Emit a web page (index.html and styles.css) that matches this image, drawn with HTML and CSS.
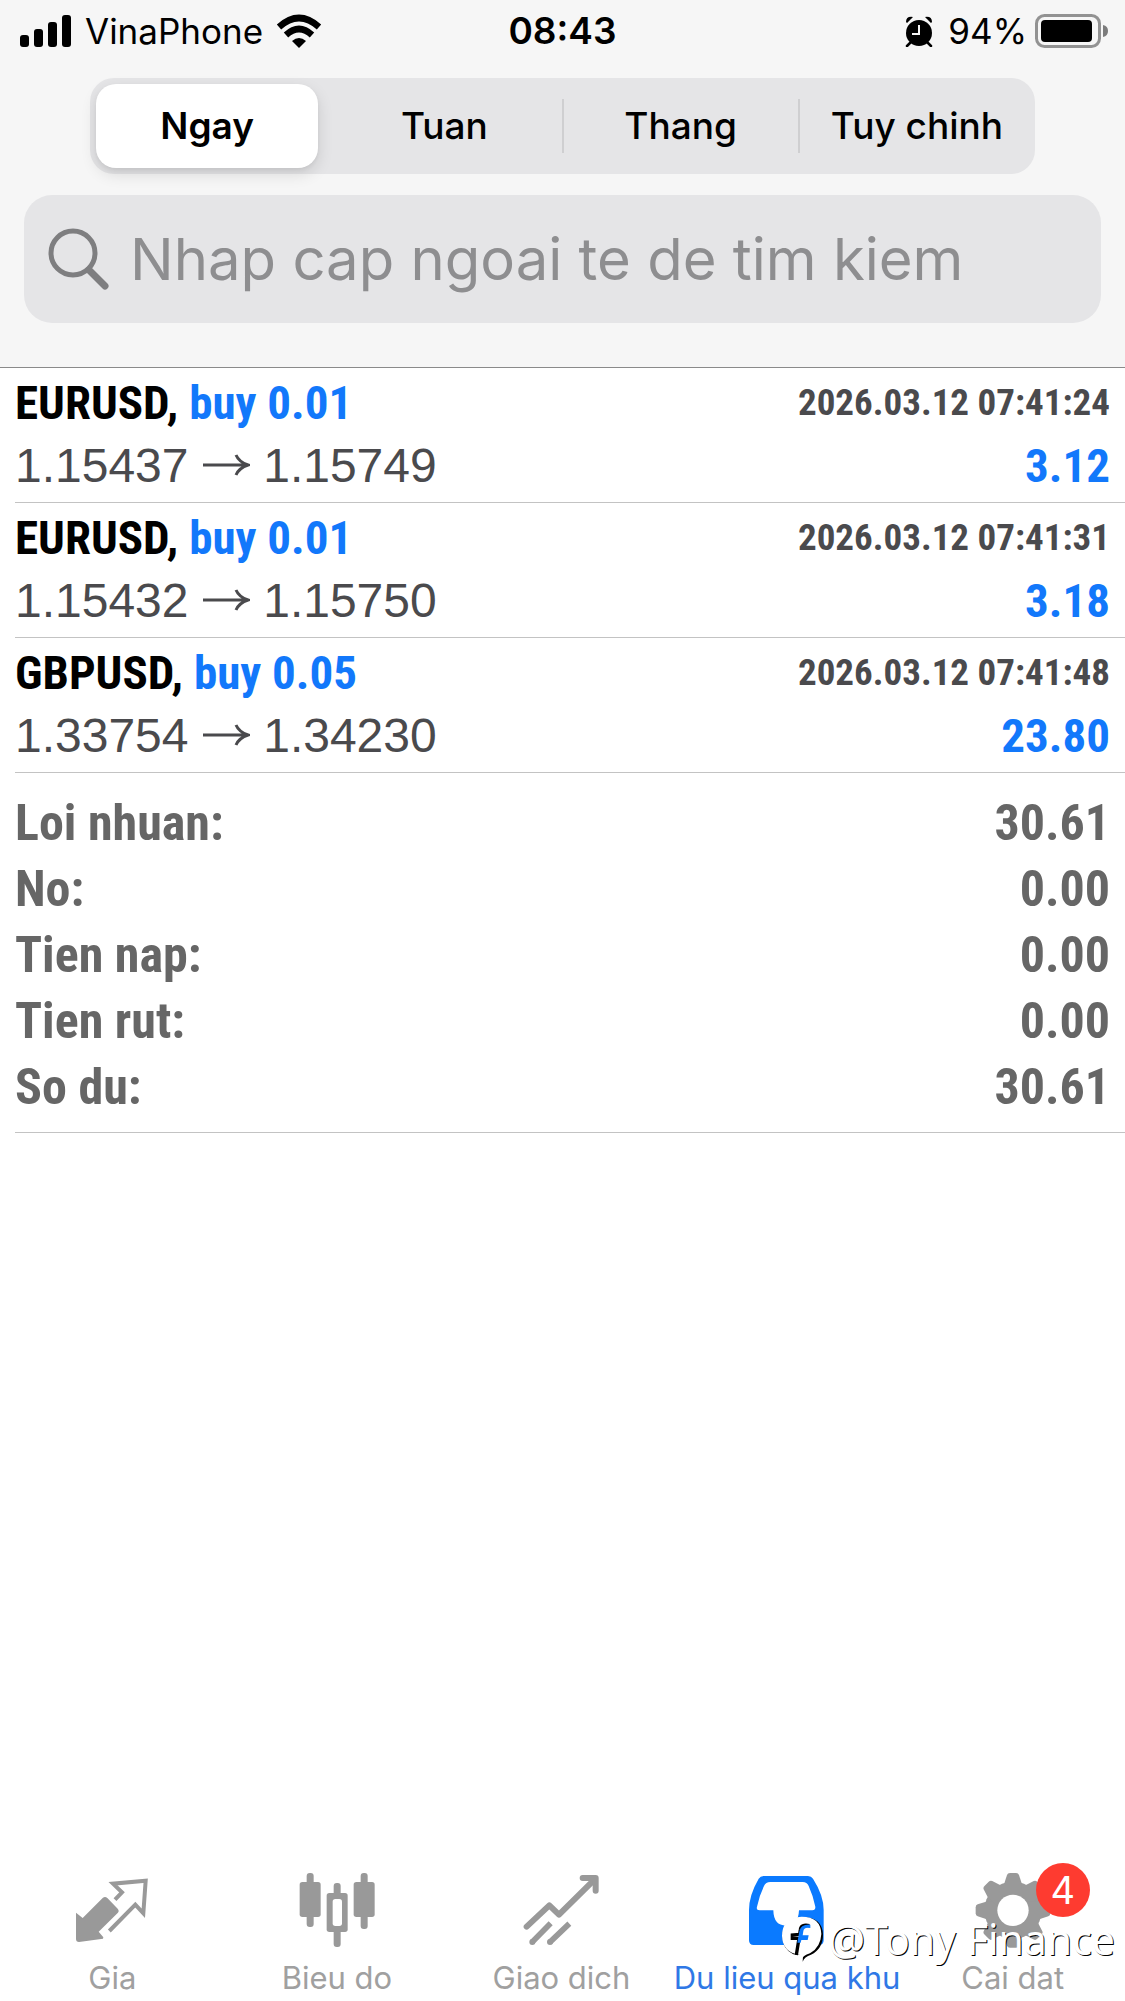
FILE: index.html
```html
<!DOCTYPE html>
<html lang="vi">
<head>
<meta charset="utf-8">
<meta name="viewport" content="width=device-width, initial-scale=1">
<title>Du lieu qua khu</title>
<link rel="stylesheet" href="styles.css">
</head>
<body>
<svg class="defs" width="0" height="0" aria-hidden="true">
  <symbol id="arrow" viewBox="0 0 48 34"><path d="M1 17h45M34 7q3 7 12 10-9 3-12 10" fill="none" stroke="currentColor" stroke-width="3"/></symbol>
</svg>
<div class="app">
  <header class="header">
    <div class="status">
      <div class="status-side">
        <svg class="signal" viewBox="0 0 52 32" aria-hidden="true"><rect x="0" y="20" width="9" height="12" rx="3"/><rect x="14" y="14" width="9" height="18" rx="3"/><rect x="28" y="7" width="9" height="25" rx="3"/><rect x="42" y="0" width="9" height="32" rx="3"/></svg>
        <span class="carrier">VinaPhone</span>
        <svg class="wifi" viewBox="0 0 46 34" aria-hidden="true"><path d="M3 13Q23-5 43 13M10 21Q23 9 36 21" fill="none" stroke="#000" stroke-width="6.5"/><path d="M16 27Q23 21 30 27L23 34Z"/></svg>
      </div>
      <time class="clock">08:43</time>
      <div class="status-side status-right">
        <svg class="alarm" viewBox="0 0 28 31" aria-hidden="true"><circle cx="14" cy="17" r="13"/><path d="M1 6Q1 0 8 1L2 7ZM27 6Q27 0 20 1L26 7Z"/><path d="M5 27l-3 3M23 27l3 3" stroke="#000" stroke-width="2.5" stroke-linecap="round"/><path d="M14 9v9H7" fill="none" stroke="#f6f6f6" stroke-width="2"/></svg>
        <span class="percent">94%</span>
        <svg class="battery" viewBox="0 0 74 34" aria-hidden="true"><rect x="1.5" y="1.5" width="63" height="31" rx="8" fill="none" stroke="#929292" stroke-width="3"/><rect x="6" y="6" width="51" height="22" rx="4"/><path d="M68 11q5 1 5 6t-5 6z" fill="#7c7c7c"/></svg>
      </div>
    </div>
    <div class="segments" role="group" aria-label="Ky">
      <button class="segment segment-on" type="button" aria-pressed="true">Ngay</button>
      <button class="segment" type="button">Tuan</button>
      <button class="segment segment-rule" type="button">Thang</button>
      <button class="segment segment-rule" type="button">Tuy chinh</button>
    </div>
    <label class="search">
      <svg class="search-icon" viewBox="0 0 62 62" aria-hidden="true"><circle cx="25" cy="25" r="22" fill="none" stroke="#7e7e80" stroke-width="5"/><path d="M41 42l16 16" stroke="#7e7e80" stroke-width="7" stroke-linecap="round"/></svg>
      <input class="search-input" type="text" placeholder="Nhap cap ngoai te de tim kiem" aria-label="Nhap cap ngoai te de tim kiem">
    </label>
  </header>

  <main class="main">
    <ul class="trades">
      <li class="trade">
        <div class="line"><strong class="symbol">EURUSD, <span class="side">buy 0.01</span></strong><time class="date">2026.03.12 07:41:24</time></div>
        <div class="line"><span class="prices">1.15437 <svg class="arrow" role="img" aria-label="→"><use href="#arrow"/></svg> 1.15749</span><strong class="profit">3.12</strong></div>
      </li>
      <li class="trade">
        <div class="line"><strong class="symbol">EURUSD, <span class="side">buy 0.01</span></strong><time class="date">2026.03.12 07:41:31</time></div>
        <div class="line"><span class="prices">1.15432 <svg class="arrow" role="img" aria-label="→"><use href="#arrow"/></svg> 1.15750</span><strong class="profit">3.18</strong></div>
      </li>
      <li class="trade">
        <div class="line"><strong class="symbol">GBPUSD, <span class="side">buy 0.05</span></strong><time class="date">2026.03.12 07:41:48</time></div>
        <div class="line"><span class="prices">1.33754 <svg class="arrow" role="img" aria-label="→"><use href="#arrow"/></svg> 1.34230</span><strong class="profit">23.80</strong></div>
      </li>
    </ul>
    <dl class="summary">
      <div class="total"><dt>Loi nhuan:</dt><dd>30.61</dd></div>
      <div class="total"><dt>No:</dt><dd>0.00</dd></div>
      <div class="total"><dt>Tien nap:</dt><dd>0.00</dd></div>
      <div class="total"><dt>Tien rut:</dt><dd>0.00</dd></div>
      <div class="total"><dt>So du:</dt><dd>30.61</dd></div>
    </dl>
  </main>

  <nav class="tabs">
    <a class="tab" href="#gia">
      <svg class="tab-icon" viewBox="223 66 228 228" aria-hidden="true"><path d="M229 188l20 16 60-60q7-6 14 0l31 32q6 7 0 13l-57 56 14 17-1 4-72 10q-9 0-9-9z" fill="#999"/><path d="M346 149l21-22-27-26 98-9-7 98-24-26-78 79" fill="none" stroke="#999" stroke-width="12"/></svg>
      <span>Gia</span>
    </a>
    <a class="tab" href="#bieu-do">
      <svg class="tab-icon" viewBox="898 66 228 228" aria-hidden="true"><g fill="#999"><rect x="921" y="69" width="21" height="162" rx="9"/><rect x="900" y="96" width="63" height="105" rx="8"/><rect x="1083" y="69" width="21" height="168" rx="9"/><rect x="1062" y="96" width="63" height="105" rx="8"/><rect x="1002" y="99" width="21" height="192" rx="9"/><rect x="981" y="129" width="63" height="117" rx="8"/></g><rect x="999" y="147" width="28" height="81" rx="8" fill="#fff"/></svg>
      <span>Bieu do</span>
    </a>
    <a class="tab" href="#giao-dich">
      <svg class="tab-icon" viewBox="373 66 228 228" aria-hidden="true"><g fill="none" stroke="#999" stroke-width="18" stroke-linecap="round" stroke-linejoin="round"><path d="M384 230l68-64 29 28L588 88"/><path d="M552 84h39v38"/></g><path d="M400 277l56-57M453 277l59-56" stroke="#999" stroke-width="17"/><g fill="#999"><circle cx="401" cy="276" r="9"/><circle cx="454" cy="276" r="9"/></g></svg>
      <span>Giao dich</span>
    </a>
    <a class="tab tab-on" href="#lich-su" aria-current="page">
      <svg class="tab-icon" viewBox="148 66 228 228" aria-hidden="true"><path d="M192 78h133q10 0 15 8 32 50 32 94v91q0 14-14 14H162q-14 0-14-14v-91q0-44 29-94 5-8 15-8z" fill="#0a7aff"/><path d="M212 96h97q13 0 18 12 14 31 20 62 1 11-9 11h-40q-2 46-39 46t-38-46h-41q-11 0-8-11 7-33 21-62 5-12 19-12z" fill="#fff"/></svg>
      <span>Du lieu qua khu</span>
    </a>
    <a class="tab" href="#cai-dat">
      <span class="icon-wrap">
        <svg class="tab-icon" viewBox="823 66 228 228" aria-hidden="true"><g fill="#999"><circle cx="937" cy="181" r="86"/><g id="tooth"><path d="M911 100l8-25q2-6 9-6h18q7 0 9 6l8 25v162l-8 25q-2 6-9 6h-18q-7 0-9-6l-8-25z"/></g><use href="#tooth" transform="rotate(45 937 181)"/><use href="#tooth" transform="rotate(90 937 181)"/><use href="#tooth" transform="rotate(135 937 181)"/></g><circle cx="937" cy="181" r="47" fill="#fff"/></svg>
        <span class="badge">4</span>
      </span>
      <span>Cai dat</span>
    </a>
    <div class="credit">
      <svg class="credit-logo" viewBox="244 200 126 144" aria-hidden="true"><path d="M307 207q58 0 60 52 0 42-36 60-20 6-25 21 0-15 2-20l-30-2q-33-16-33-55 0-54 62-56z" fill="#000"/><path d="M303 205q57 0 59 52-2 40-34 58-22 6-26 20l-6-16q-50-6-52-56 0-56 59-58z" fill="#fff"/><path d="M326 232q-25-5-27 12l-2 14-22 2v10h20l-8 50" fill="none" stroke="#000" stroke-width="10"/><path d="M329 239q-20-4-21 10l-2 12h18l-3 14h-19l-2 8h-10l6-34q4-22 33-20z" fill="#0a7aff"/></svg>
      <span>@Tony Finance</span>
    </div>
  </nav>
</div>
</body>
</html>
```
FILE: styles.css
```css
* { box-sizing: border-box; }

body {
  margin: 0;
  background: #fff;
  color: #000;
  font-family: Inter, "Liberation Sans", sans-serif;
}

.defs { display: block; }

.app {
  display: flex;
  flex-direction: column;
  min-height: 100vh;
}

/* Header */
.header {
  display: flex;
  flex-direction: column;
  padding: 0 24px 44px;
  background: #f6f6f6;
  border-bottom: 1px solid #8a8a8a;
}

.status {
  display: grid;
  grid-template-columns: 1fr auto 1fr;
  align-items: center;
  height: 62px;
  margin: 0 -8px 16px;
  font-size: 35px;
  line-height: 40px;
}

.status-side {
  display: flex;
  align-items: center;
  gap: 13px;
  padding-left: 4px;
}

.status-right {
  justify-content: flex-end;
  gap: 8px;
  padding: 0;
}

.clock {
  font-size: 37px;
  font-weight: 600;
}

.signal { width: 52px; height: 32px; }
.wifi { width: 46px; height: 34px; }
.alarm { width: 28px; height: 31px; margin-right: 7px; }
.battery { width: 74px; height: 34px; }

.segments {
  display: grid;
  grid-template-columns: repeat(4, 1fr);
  height: 96px;
  margin: 0 66px;
  padding: 6px 0;
  background: #e5e5e7;
  border-radius: 24px;
}

.segment {
  position: relative;
  margin: 0;
  padding: 0;
  border: 0;
  background: none;
  color: #000;
  font: 500 37px/44px Inter, "Liberation Sans", sans-serif;
}

.segment-on {
  margin: 0 8px 0 6px;
  background: #fff;
  border-radius: 20px;
  box-shadow: 0 6px 16px rgba(0, 0, 0, 0.12), 0 2px 4px rgba(0, 0, 0, 0.05);
  font-weight: 600;
}

.segment-rule::before {
  content: "";
  position: absolute;
  left: -1px;
  top: 15px;
  bottom: 15px;
  width: 2px;
  background: #cfcfd1;
}

.search {
  display: flex;
  align-items: center;
  gap: 20px;
  height: 128px;
  margin-top: 21px;
  padding: 0 24px;
  background: #e5e5e7;
  border-radius: 28px;
}

.search-icon {
  flex: none;
  width: 62px;
  height: 62px;
}

.search-input {
  flex: 1;
  min-width: 0;
  padding: 0;
  border: 0;
  outline: 0;
  background: none;
  font: 400 58px/72px Inter, "Liberation Sans", sans-serif;
}

.search-input::placeholder {
  color: #8e8e90;
  opacity: 1;
}

/* History */
.main { flex: 1; }

.trades {
  margin: 0;
  padding: 0 0 0 15px;
  list-style: none;
}

.trade {
  padding: 3px 15px 5px 0;
  border-bottom: 1px solid #c3c3c3;
}

.line {
  display: flex;
  align-items: center;
  justify-content: space-between;
  height: 63px;
  font-size: 48px;
  line-height: 63px;
}

.symbol,
.date,
.profit,
.summary {
  font-family: "Roboto Condensed", "Liberation Sans Narrow", "Liberation Sans", sans-serif;
  font-weight: 700;
}

.symbol,
.profit { font-size: 47px; }

.side,
.profit { color: #1278fb; }

.date {
  color: #4a4a4d;
  font-size: 37px;
}

.prices {
  color: #4a4a4d;
  font-family: "Liberation Sans", sans-serif;
}

.arrow {
  width: 48px;
  height: 34px;
  vertical-align: baseline;
}

.summary {
  margin: 0 0 0 15px;
  padding: 17px 15px 12px 0;
  border-bottom: 1px solid #c3c3c3;
  color: #666;
  font-size: 50px;
  line-height: 66px;
}

.total {
  display: flex;
  justify-content: space-between;
}

.total dd { margin: 0; }

/* Tab bar */
.tabs {
  position: relative;
  display: grid;
  grid-template-columns: repeat(5, 1fr);
  padding-bottom: 5px;
}

.tab {
  display: flex;
  flex-direction: column;
  align-items: center;
  gap: 12px;
  color: #a0a0a0;
  font-size: 31px;
  font-weight: 400;
  line-height: 36px;
  text-decoration: none;
  white-space: nowrap;
}

.tab-on { color: #2f78e6; }

.tab-icon {
  display: block;
  width: 76px;
  height: 76px;
}

.icon-wrap { position: relative; }

.badge {
  position: absolute;
  top: -9px;
  right: -39px;
  width: 54px;
  height: 54px;
  border-radius: 50%;
  background: #fe3b30;
  color: #fff;
  font-size: 38px;
  font-weight: 400;
  line-height: 54px;
  text-align: center;
}

.credit {
  position: absolute;
  right: 10px;
  bottom: 36px;
  display: flex;
  align-items: center;
  gap: 4px;
  color: #fff;
  font: 400 41px/52px "Noto Sans", "Open Sans", sans-serif;
  text-shadow: 1px 1px 0 #000;
}

.credit-logo {
  width: 42px;
  height: 48px;
}
```
